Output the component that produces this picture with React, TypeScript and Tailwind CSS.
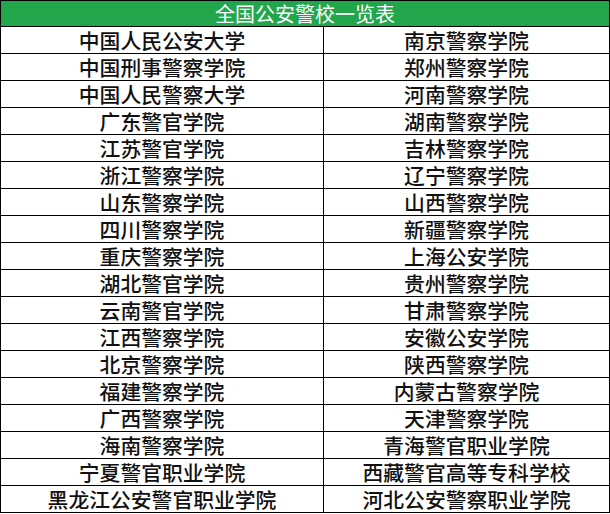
const rows: [string, string][] = [
  ['中国人民公安大学', '南京警察学院'],
  ['中国刑事警察学院', '郑州警察学院'],
  ['中国人民警察大学', '河南警察学院'],
  ['广东警官学院', '湖南警察学院'],
  ['江苏警官学院', '吉林警察学院'],
  ['浙江警察学院', '辽宁警察学院'],
  ['山东警察学院', '山西警察学院'],
  ['四川警察学院', '新疆警察学院'],
  ['重庆警察学院', '上海公安学院'],
  ['湖北警官学院', '贵州警察学院'],
  ['云南警官学院', '甘肃警察学院'],
  ['江西警察学院', '安徽公安学院'],
  ['北京警察学院', '陕西警察学院'],
  ['福建警察学院', '内蒙古警察学院'],
  ['广西警察学院', '天津警察学院'],
  ['海南警察学院', '青海警官职业学院'],
  ['宁夏警官职业学院', '西藏警官高等专科学校'],
  ['黑龙江公安警官职业学院', '河北公安警察职业学院'],
]

export default function App() {
  return (
    <div
      className="w-[610px] h-[514px] bg-white text-[20.8px] leading-none text-[#111] font-medium"
      style={{ fontFamily: '"Noto Sans CJK SC", "Noto Sans", sans-serif' }}
    >
      <div className="h-[27px] bg-[#22a64b] border border-black flex items-center justify-center text-white text-[20px] font-normal">
        全国公安警校一览表
      </div>
      <div className="grid grid-cols-[323px_1fr] border-l border-black">
        {rows.map(([a, b], i) => (
          <div key={i} className="contents">
            <div className="h-[27px] flex items-center justify-center border-r border-b border-black">{a}</div>
            <div className="h-[27px] flex items-center justify-center border-r border-b border-black">{b}</div>
          </div>
        ))}
      </div>
    </div>
  )
}
